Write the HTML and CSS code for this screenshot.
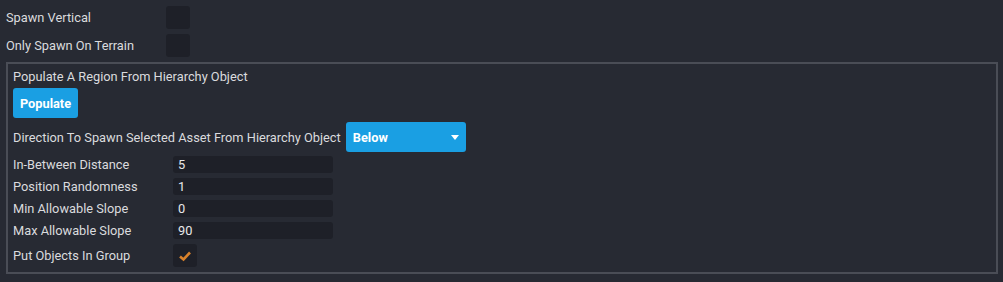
FILE: index.html
```html
<!DOCTYPE html>
<html>
<head>
  <title>Populate Settings</title>
  <link rel="stylesheet" href="styles.css">
</head>
<body>
  <div class="panel">
    <div class="row">
      <label class="name">Spawn Vertical</label>
      <div class="check"></div>
    </div>
    <div class="row">
      <label class="name">Only Spawn On Terrain</label>
      <div class="check"></div>
    </div>

    <!-- populate region -->
    <div class="group">
      <div class="title">Populate A Region From Hierarchy Object</div>
      <button class="btn">Populate</button>

      <div class="dir-row">
        <span>Direction To Spawn Selected Asset From Hierarchy Object</span>
        <div class="dropdown">
          <span>Below</span>
          <span class="arrow"></span>
        </div>
      </div>

      <div class="field">
        <label class="name">In-Between Distance</label>
        <div class="input">5</div>
      </div>
      <div class="field">
        <label class="name">Position Randomness</label>
        <div class="input">1</div>
      </div>
      <div class="field">
        <label class="name">Min Allowable Slope</label>
        <div class="input">0</div>
      </div>
      <div class="field">
        <label class="name">Max Allowable Slope</label>
        <div class="input">90</div>
      </div>
      <div class="row">
        <label class="name">Put Objects In Group</label>
        <div class="check">
          <svg width="14" height="12" viewBox="0 0 14 12">
            <path d="M2 6.5 L5.5 9.5 L12 2.5" fill="none" stroke="#d9822b" stroke-width="2.6"/>
          </svg>
        </div>
      </div>
    </div>
  </div>
</body>
</html>
```

FILE: styles.css
```css
body {
    margin: 0;
    background-color: #272a33;
    font-family: Roboto, "Noto Sans", sans-serif;
    font-size: 12.8px;
    color: #dadbde;
}

.panel {
    padding: 6px 5px 0 6px;
    display: flex;
    flex-direction: column;
    gap: 5px;
}

.row {
    display: flex;
    align-items: center;
    height: 23px;
}

.name {
    width: 160px;
    flex-shrink: 0;
}

.check {
    width: 24px;
    height: 23px;
    border-radius: 3px;
    background-color: #1e2028;
    display: flex;
    align-items: center;
    justify-content: center;
}

.group {
    border: 2px solid #4a4d56;
    padding: 5px 5px 3px 5px;
    display: flex;
    flex-direction: column;
    align-items: flex-start;
}

.title {
    line-height: 15px;
    margin-bottom: 4px;
}

.btn {
    height: 30px;
    width: 65px;
    padding: 0;
    border: none;
    border-radius: 3px;
    background-color: #1a9fe3;
    color: #ffffff;
    font-family: Roboto, "Noto Sans", sans-serif;
    font-weight: bold;
    font-size: 12.8px;
    margin-bottom: 4px;
}

.dir-row {
    display: flex;
    align-items: center;
    gap: 5px;
    margin-bottom: 4px;
}

.dropdown {
    width: 120px;
    height: 30px;
    border-radius: 3px;
    background-color: #1a9fe3;
    color: #ffffff;
    font-weight: bold;
    display: flex;
    align-items: center;
    justify-content: space-between;
    padding: 0 7px;
    box-sizing: border-box;
}

.arrow {
    width: 0;
    height: 0;
    border-left: 4px solid transparent;
    border-right: 4px solid transparent;
    border-top: 5px solid #ffffff;
}

.field {
    display: flex;
    align-items: center;
    height: 17px;
    margin-bottom: 5px;
}

.input {
    width: 160px;
    height: 17px;
    line-height: 17px;
    border-radius: 3px;
    background-color: #1e2028;
    padding-left: 5px;
    box-sizing: border-box;
    color: #e8e8ea;
}

.group .row {
    margin-bottom: 2px;
}
```
